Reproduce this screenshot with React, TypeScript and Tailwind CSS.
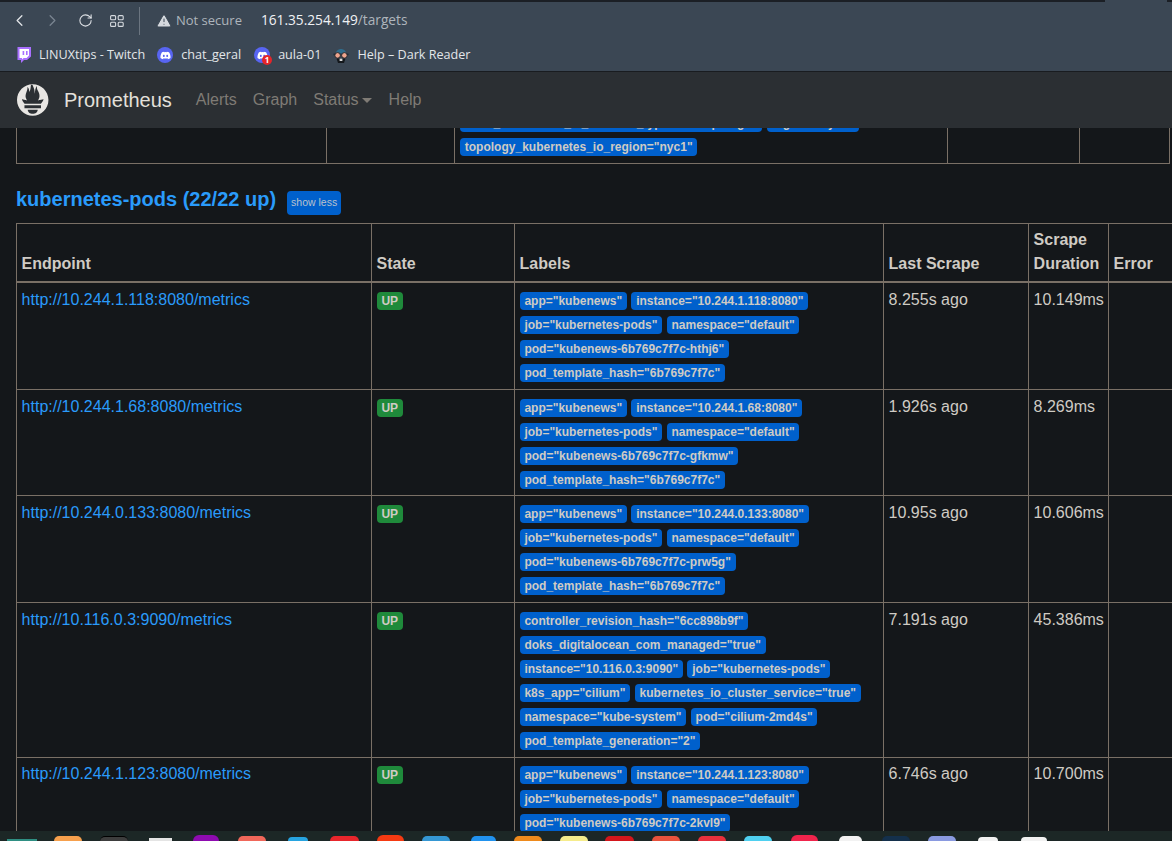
import { ChevronLeft, ChevronRight, RotateCw, TriangleAlert } from 'lucide-react';
import { FaDiscord } from 'react-icons/fa';

interface Target {
  endpoint: string;
  labels: string[];
  lastScrape: string;
  duration: string;
}

const template = 'pod_template_hash="6b769c7f7c"';

const targets: Target[] = [
  {
    endpoint: 'http://10.244.1.118:8080/metrics',
    labels: ['app="kubenews"', 'instance="10.244.1.118:8080"', 'job="kubernetes-pods"', 'namespace="default"', 'pod="kubenews-6b769c7f7c-hthj6"', template],
    lastScrape: '8.255s ago',
    duration: '10.149ms',
  },
  {
    endpoint: 'http://10.244.1.68:8080/metrics',
    labels: ['app="kubenews"', 'instance="10.244.1.68:8080"', 'job="kubernetes-pods"', 'namespace="default"', 'pod="kubenews-6b769c7f7c-gfkmw"', template],
    lastScrape: '1.926s ago',
    duration: '8.269ms',
  },
  {
    endpoint: 'http://10.244.0.133:8080/metrics',
    labels: ['app="kubenews"', 'instance="10.244.0.133:8080"', 'job="kubernetes-pods"', 'namespace="default"', 'pod="kubenews-6b769c7f7c-prw5g"', template],
    lastScrape: '10.95s ago',
    duration: '10.606ms',
  },
  {
    endpoint: 'http://10.116.0.3:9090/metrics',
    labels: [
      'controller_revision_hash="6cc898b9f"',
      'doks_digitalocean_com_managed="true"',
      'instance="10.116.0.3:9090"',
      'job="kubernetes-pods"',
      'k8s_app="cilium"',
      'kubernetes_io_cluster_service="true"',
      'namespace="kube-system"',
      'pod="cilium-2md4s"',
      'pod_template_generation="2"',
    ],
    lastScrape: '7.191s ago',
    duration: '45.386ms',
  },
  {
    endpoint: 'http://10.244.1.123:8080/metrics',
    labels: ['app="kubenews"', 'instance="10.244.1.123:8080"', 'job="kubernetes-pods"', 'namespace="default"', 'pod="kubenews-6b769c7f7c-2kvl9"', template],
    lastScrape: '6.746s ago',
    duration: '10.700ms',
  },
];

const dockIcons = [
  'ml-[7px] w-[30px] h-[2px] bg-[#2f8f83]',
  'ml-[17px] w-[28px] h-[5px] rounded-t-lg bg-[#f6a04d]',
  'ml-[18px] w-[28px] h-[5px] rounded-t-lg bg-[#3d3d3d] border-t border-black',
  'ml-[21px] w-[23px] h-[3px] bg-[#e4e4e4]',
  'ml-[21px] w-[26px] h-[6px] rounded-t-full bg-[#8e0bb0]',
  'ml-[19px] w-[28px] h-[5px] rounded-t-lg bg-[#f0675a]',
  'ml-[22px] w-[20px] h-[4px] rounded-t-full bg-[#27a4e0]',
  'ml-[22px] w-[29px] h-[5px] rounded-t-lg bg-[#e8262c]',
  'ml-[18px] w-[27px] h-[6px] rounded-t-xl bg-[#f53a12]',
  'ml-[18px] w-[28px] h-[5px] rounded-t-lg bg-[#3597d3]',
  'ml-[21px] w-[25px] h-[5px] rounded-t-lg bg-[#2192ee]',
  'ml-[18px] w-[28px] h-[5px] rounded-t-lg bg-[#ee8a1c]',
  'ml-[18px] w-[28px] h-[5px] rounded-t-lg bg-[#f6ec8c]',
  'ml-[17px] w-[29px] h-[5px] rounded-t-lg bg-[#d4161c]',
  'ml-[18px] w-[28px] h-[5px] rounded-t-lg bg-[#e8523c]',
  'ml-[18px] w-[28px] h-[5px] rounded-t-lg bg-[#e8303c]',
  'ml-[18px] w-[28px] h-[5px] rounded-t-lg bg-[#4fd0f0]',
  'ml-[19px] w-[27px] h-[6px] rounded-t-full bg-[#f0244c]',
  'ml-[21px] w-[23px] h-[5px] rounded-t-full bg-[#f2f2f2]',
  'ml-[20px] w-[28px] h-[5px] rounded-t-lg bg-[#14304c]',
  'ml-[18px] w-[28px] h-[5px] rounded-t-lg bg-[#8a9ae0]',
  'ml-[22px] w-[20px] h-[4px] rounded-t-full bg-[#f2f2f2]',
  'ml-[23px] w-[26px] h-[4px] rounded-t-md bg-[#f2f2f2]',
];

function LabelBadge({ text }: { text: string }) {
  return (
    <span className="inline-block rounded-[4px] bg-[#0060cc] px-[4.8px] py-[3px] text-[12px] leading-[12px] font-bold whitespace-nowrap text-[#cfcbc4]">
      {text}
    </span>
  );
}

function LabelList({ labels }: { labels: string[] }) {
  return (
    <>
      {labels.map((label) => (
        <span key={label}>
          <LabelBadge text={label} />{' '}
        </span>
      ))}
    </>
  );
}

function PrometheusLogo() {
  return (
    <svg viewBox="0 0 115.333 114" className="h-[32px] w-[32px]" fill="#e8e6e3">
      <path d="M56.667.667C25.372.667 0 26.036 0 57.332c0 31.295 25.372 56.666 56.667 56.666s56.666-25.371 56.666-56.666C113.333 26.036 87.961.667 56.667.667zm0 106.055c-9.958 0-18.031-6.652-18.031-14.856h36.063c0 8.204-8.073 14.856-18.032 14.856zm29.782-19.771H26.881v-10.8h59.569v10.8zm-.214-16.36H27.075c-.197-.227-.398-.45-.589-.68-6.097-7.403-7.533-11.268-8.928-15.207-.024-.13 7.393 1.516 12.652 2.699 0 0 2.706.626 6.663 1.347-3.799-4.453-6.055-10.114-6.055-15.899 0-12.7 9.74-23.798 6.226-32.769 3.42.278 7.078 7.22 7.325 18.073 3.636-5.025 5.158-14.201 5.158-19.828 0-5.826 3.839-12.593 7.679-12.825-3.423 5.642.886 10.479 4.717 22.478 1.437 4.507 1.254 12.092 2.364 16.902.368-9.99 2.086-24.566 8.423-29.598-2.796 6.337.414 14.267 2.61 18.079 3.543 6.153 5.691 10.815 5.691 19.632 0 5.845-2.158 11.348-5.798 15.65 4.139-.777 6.998-1.477 6.998-1.477l13.442-2.622c.001-.001-1.953 8.032-9.424 15.75z" />
    </svg>
  );
}

function TabGroupsIcon() {
  return (
    <svg viewBox="0 0 14 12" className="h-[12px] w-[14px]" fill="none" stroke="#d5d9de" strokeWidth="1.1">
      <rect x="0.6" y="0.6" width="5" height="4.2" rx="1" />
      <rect x="8.2" y="0.6" width="5" height="4.2" rx="1" />
      <rect x="0.6" y="7.2" width="5" height="4.2" rx="1" />
      <rect x="8.2" y="7.2" width="5" height="4.2" rx="1" />
    </svg>
  );
}

function TwitchIcon() {
  return (
    <svg viewBox="0 0 15 16" className="h-[16px] w-[15px]">
      <path d="M1.5 0H15V9.5L11 13H8L5 16V13H1.5Z" fill="#a970ff" />
      <path d="M3.5 2H13V8.6L10.6 11H7.6L6 12.6V11H3.5Z" fill="#fff" />
      <rect x="6.6" y="4" width="1.6" height="4" fill="#a970ff" />
      <rect x="10" y="4" width="1.6" height="4" fill="#a970ff" />
    </svg>
  );
}

function DarkReaderIcon() {
  return (
    <svg viewBox="0 0 16 16" className="h-[16px] w-[16px]">
      <path d="M2.5 8 C2.5 0 13.5 0 13.5 8 Z" fill="#2f6c8c" />
      <rect x="0.5" y="6.6" width="15" height="1.6" fill="#1c2a36" />
      <circle cx="4.6" cy="8.4" r="2.8" fill="#f0a58e" stroke="#20262c" strokeWidth="1" />
      <circle cx="11.4" cy="8.4" r="2.8" fill="#f0a58e" stroke="#20262c" strokeWidth="1" />
      <path d="M3.5 11.5 H12.5 L11 16 H5 Z" fill="#14181c" />
      <path d="M6.6 11.6 H9.4 V14 H6.6 Z" fill="#d8d8d8" />
    </svg>
  );
}

function BrowserChrome() {
  return (
    <div className="bg-[#3b4754] font-['Open_Sans',sans-serif]">
      <div className="flex h-[2px] justify-end bg-[#1b1f25] pr-[5px]">
        <div className="h-[2px] w-[62px] bg-[#3b4754]" />
      </div>
      <div className="flex h-[37px] items-center pl-[10px]">
        <ChevronLeft size={19} strokeWidth={1.6} className="text-[#e2e5e8]" />
        <ChevronRight size={19} strokeWidth={1.6} className="ml-[14px] text-[#7a8591]" />
        <RotateCw size={15} strokeWidth={1.7} className="ml-[16px] text-[#dfe2e6]" />
        <div className="ml-[17px]">
          <TabGroupsIcon />
        </div>
        <div className="ml-[15px] h-[28px] w-px bg-[#6b7580]" />
        <TriangleAlert size={16} fill="#d5d9de" stroke="#3b4754" strokeWidth={1.5} className="ml-[16px]" />
        <span className="ml-[4px] text-[13px] text-[#aeb5bc]">Not secure</span>
        <span className="ml-[19px] text-[13.7px] text-[#f0f2f4]">
          161.35.254.149<span className="text-[#aeb5bc]">/targets</span>
        </span>
      </div>
      <div className="flex h-[32px] items-center pl-[16px] text-[12.6px] text-[#e3e6e9]">
        <TwitchIcon />
        <span className="ml-[8px]">LINUXtips - Twitch</span>
        <span className="ml-[12px] flex h-[16px] w-[16px] items-center justify-center rounded-full bg-[#5865f2]">
          <FaDiscord size={11} className="text-white" />
        </span>
        <span className="ml-[8px]">chat_geral</span>
        <span className="relative ml-[13px] flex h-[16px] w-[16px] items-center justify-center rounded-full bg-[#5865f2]">
          <FaDiscord size={11} className="text-white" />
          <span className="absolute -right-[2px] -bottom-[2px] flex h-[10px] w-[10px] items-center justify-center rounded-full bg-[#e5252a] text-[8px] leading-none font-bold text-white">
            1
          </span>
        </span>
        <span className="ml-[8px]">aula-01</span>
        <span className="ml-[12px]">
          <DarkReaderIcon />
        </span>
        <span className="ml-[8px]">Help – Dark Reader</span>
      </div>
      <div className="h-px bg-[#191c20]" />
    </div>
  );
}

function Navbar() {
  return (
    <nav className="flex h-[56px] items-center bg-[#2b2f33] pl-[17px] font-['Liberation_Sans',sans-serif]">
      <PrometheusLogo />
      <span className="ml-[15px] text-[20px] text-[#e3e0db]">Prometheus</span>
      <div className="ml-[24px] flex text-[16px] text-[#7f7b75]">
        <span>Alerts</span>
        <span className="ml-[16px]">Graph</span>
        <span className="ml-[16px] flex items-center">
          Status
          <span className="ml-[3px] h-0 w-0 border-x-[5px] border-t-[5px] border-x-transparent border-t-[#7f7b75]" />
        </span>
        <span className="ml-[17px]">Help</span>
      </div>
    </nav>
  );
}

function PreviousTable() {
  const td = 'border border-[#7a7066] p-[5px]';
  return (
    <table className="w-[1153px] table-fixed border-collapse">
      <colgroup>
        <col className="w-[310px]" />
        <col className="w-[128px]" />
        <col className="w-[493px]" />
        <col className="w-[132px]" />
        <col className="w-[90px]" />
      </colgroup>
      <tbody>
        <tr>
          <td className={td} />
          <td className={td} />
          <td className={`${td} leading-[24px]`}>
            <LabelList labels={['node_kubernetes_io_instance_type="s-4vcpu-8gb"', 'region="nyc1"', 'topology_kubernetes_io_region="nyc1"']} />
          </td>
          <td className={td} />
          <td className={td} />
        </tr>
      </tbody>
    </table>
  );
}

function UpBadge() {
  return (
    <span className="inline-block rounded-[4px] bg-[#1f8a3b] px-[4.8px] py-[3px] text-[12px] leading-[12px] font-bold text-[#cfcbc4]">
      UP
    </span>
  );
}

function TargetsTable() {
  const th = 'border border-b-2 border-[#7a7066] px-[4.6px] pt-[4px] pb-[5.2px] text-left align-bottom leading-[24px] font-bold';
  const td = 'border border-[#7a7066] px-[4.6px] py-[4.8px] align-top leading-[24px]';
  return (
    <table className="w-[1178px] table-fixed border-collapse">
      <colgroup>
        <col className="w-[355px]" />
        <col className="w-[143px]" />
        <col className="w-[369px]" />
        <col className="w-[145px]" />
        <col className="w-[80px]" />
        <col className="w-[86px]" />
      </colgroup>
      <thead>
        <tr>
          <th className={th}>Endpoint</th>
          <th className={th}>State</th>
          <th className={th}>Labels</th>
          <th className={th}>Last Scrape</th>
          <th className={th}>Scrape Duration</th>
          <th className={th}>Error</th>
        </tr>
      </thead>
      <tbody>
        {targets.map((target) => (
          <tr key={target.endpoint}>
            <td className={td}>
              <a className="text-[#2a9bfb]">{target.endpoint}</a>
            </td>
            <td className={td}>
              <UpBadge />
            </td>
            <td className={td}>
              <LabelList labels={target.labels} />
            </td>
            <td className={td}>{target.lastScrape}</td>
            <td className={td}>{target.duration}</td>
            <td className={td} />
          </tr>
        ))}
      </tbody>
    </table>
  );
}

export default function App() {
  return (
    <div className="flex h-[841px] w-[1172px] flex-col overflow-hidden bg-[#14171a]">
      <BrowserChrome />
      <Navbar />
      <main className="min-h-0 flex-1 overflow-hidden pl-[16px] font-['Liberation_Sans',sans-serif] text-[16px] text-[#cfcbc4]">
        <div className="-mt-[24px]">
          <PreviousTable />
        </div>
        <div className="mt-[16px] mb-[5px] flex h-[38px] items-center">
          <h2 className="text-[20px] font-bold text-[#2a9bfb]">kubernetes-pods (22/22 up)</h2>
          <button className="mt-[8px] ml-[11px] h-[24px] rounded-[4px] bg-[#0060cc] px-[4px] text-[10.5px] text-[#b9c2cc]">show less</button>
        </div>
        <TargetsTable />
      </main>
      <div className="flex h-[10px] shrink-0 items-end overflow-hidden bg-[#1c2726]">
        {dockIcons.map((icon) => (
          <div key={icon} className={icon} />
        ))}
      </div>
    </div>
  );
}
